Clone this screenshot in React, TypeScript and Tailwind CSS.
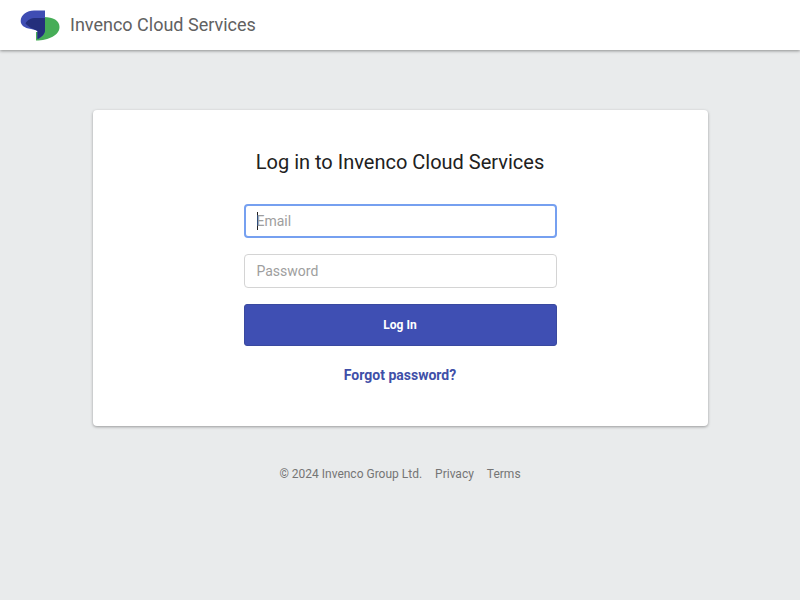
export default function App() {
  return (
    <div className="flex h-[600px] w-[800px] flex-col overflow-hidden bg-[#e9ebec] font-['Roboto',sans-serif]">
      <header className="flex h-[50px] shrink-0 items-center bg-white pl-[20px] shadow-[0_1px_3px_rgba(0,0,0,0.4)]">
        <svg width="40" height="31" viewBox="0 0 40 31" className="mt-[1px] shrink-0">
          <path d="M24 7 C33 7 39.5 10.5 39.5 17 C39.5 25 29 30.5 16 30.5 V22 H24 Z" fill="#46ad57" />
          <path d="M25 0.5 V20 C25 24 22 27 17.5 29 V21 C16 20 14 19.5 11 19 C4 18 0.7 15 0.7 11 C0.7 5 7 0.5 14 0.5 Z" fill="#3f4db3" />
          <path d="M25 8 V20 C25 24 22 27 17.5 29 V21 C15 19.5 10 18.5 5.5 13.5 C7 10 11 8 16 8 Z" fill="#242f7c" />
        </svg>
        <span className="ml-[10px] text-[18px] leading-[24px] text-[#616161]">Invenco Cloud Services</span>
      </header>
      <main className="flex flex-1 flex-col items-center pt-[60px]">
        <div className="flex h-[316px] w-[615px] flex-col items-center rounded-[4px] bg-white pt-[39px] shadow-[0_1px_3px_rgba(0,0,0,0.35)]">
          <h1 className="text-[20px] font-normal leading-[26px] text-[#212121]">Log in to Invenco Cloud Services</h1>
          <div className="mt-[29px] flex h-[34px] w-[313px] items-center rounded-[4px] border-2 border-[#76a0f0] pl-[11px] text-[14px] text-[#9e9e9e]">
            <span className="h-[18px] w-px bg-[#222]" />
            <span className="-ml-px">Email</span>
          </div>
          <div className="mt-[16px] flex h-[34px] w-[313px] items-center rounded-[4px] border border-[#d4d4d4] pl-[12px] text-[14px] text-[#9e9e9e]">Password</div>
          <button className="mt-[16px] h-[42px] w-[313px] rounded-[3px] border border-[#3a499f] bg-[#3f4fb3] text-[12px] font-bold text-white">Log In</button>
          <a className="mt-[20px] text-[14px] font-bold leading-[18px] text-[#3f4fa8]">Forgot password?</a>
        </div>
        <footer className="mt-[40px] flex text-[12px] leading-[16px] text-[#757575]">
          <span>© 2024 Invenco Group Ltd.</span>
          <span className="ml-[13px]">Privacy</span>
          <span className="ml-[13px]">Terms</span>
        </footer>
      </main>
    </div>
  );
}
